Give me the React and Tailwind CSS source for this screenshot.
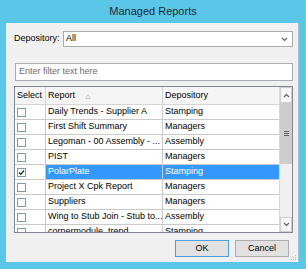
import React from 'react';

const rows = [
  { report: 'Daily Trends - Supplier A', depot: 'Stamping' },
  { report: 'First Shift Summary', depot: 'Managers' },
  { report: 'Legoman - 00 Assembly - ...', depot: 'Assembly' },
  { report: 'PIST', depot: 'Managers' },
  { report: 'PolarPlate', depot: 'Stamping', selected: true },
  { report: 'Project X Cpk Report', depot: 'Managers' },
  { report: 'Suppliers', depot: 'Managers' },
  { report: 'Wing to Stub Join - Stub to...', depot: 'Assembly' },
  { report: 'cornermodule_trend', depot: 'Stamping' },
];

const Checkbox = ({ checked }) => (
  <div className="w-[9px] h-[9px] border border-[#8296ad] bg-white flex items-center justify-center">
    {checked && (
      <svg width="7" height="7" viewBox="0 0 7 7">
        <path d="M1 3.5 L2.8 5.3 L6 1.5" fill="none" stroke="#1f2a36" strokeWidth="1.3" />
      </svg>
    )}
  </div>
);

const Chevron = ({ up }) => (
  <svg width="7" height="5" viewBox="0 0 7 5">
    <path d={up ? 'M1 4 L3.5 1.5 L6 4' : 'M1 1 L3.5 3.5 L6 1'} fill="none" stroke="#606060" strokeWidth="1.2" />
  </svg>
);

export default function App() {
  return (
    <div className="w-[306px] h-[269px] bg-[#5bc7e8] flex flex-col text-[9px] text-black" style={{ fontFamily: '"Liberation Sans", Arial, sans-serif' }}>
      {/* title bar */}
      <div className="h-[23px] flex items-center justify-center text-[11px] text-[#1c2a33] pb-[1px]">
        Managed Reports
      </div>

      {/* client area */}
      <div className="relative ml-[6px] w-[293px] h-[239px] bg-[#f0f0f0] border-r border-[#9fc6d4]">
        <div className="mt-[8px] flex items-center h-[16px]">
          <div className="pl-[8px] w-[57px]">Depository:</div>
          <div className="w-[230px] h-[16px] bg-white border border-[#acacac] flex items-center justify-between pl-[2px] pr-[4px]">
            <span>All</span>
            <Chevron />
          </div>
        </div>

        <div className="mt-[16px] ml-[9px] w-[278px] h-[18px] bg-white border border-[#abadb3] flex items-center pl-[3px] text-[#6d6d6d]">
          Enter filter text here
        </div>

        {/* grid */}
        <div className="mt-[5px] ml-[8px] w-[279px] h-[147px] border border-[#828790] bg-white flex overflow-hidden">
          <div className="w-[264px] flex flex-col">
            <div className="h-[18px] flex bg-[#f5f5f5] border-b border-[#d5d5d5] shrink-0">
              <div className="w-[31px] border-r border-[#d5d5d5] pl-[2px] flex items-center">Select</div>
              <div className="w-[117px] border-r border-[#d5d5d5] pl-[2px] flex items-center">
                <span>Report</span>
                <svg className="ml-[10px] mt-[2px]" width="6" height="5" viewBox="0 0 6 5">
                  <path d="M0.5 4.5 L3 0.8 L5.5 4.5 Z" fill="none" stroke="#c5c5c5" strokeWidth="0.9" />
                </svg>
              </div>
              <div className="w-[116px] pl-[2px] flex items-center">Depository</div>
            </div>
            {rows.map((r) => (
              <div key={r.report} className="h-[15px] flex border-b border-[#c9c9c9] shrink-0">
                <div className="w-[31px] border-r border-[#c9c9c9] pl-[2px] flex items-center bg-white">
                  <Checkbox checked={r.selected} />
                </div>
                <div className={`w-[117px] border-r border-[#c9c9c9] pl-[2px] flex items-center whitespace-nowrap overflow-hidden ${r.selected ? 'bg-[#3399ff] text-white' : ''}`}>
                  {r.report}
                </div>
                <div className={`w-[116px] pl-[2px] flex items-center ${r.selected ? 'bg-[#3399ff] text-white' : ''}`}>
                  {r.depot}
                </div>
              </div>
            ))}
          </div>

          {/* scrollbar */}
          <div className="w-[13px] flex flex-col bg-[#f0f0f0] border-l border-[#d9d9d9]">
            <div className="h-[16px] flex items-center justify-center bg-[#f7f7f7] border border-[#cfcfcf]">
              <Chevron up />
            </div>
            <div className="h-[61px] bg-[#cdcdcd] flex items-center justify-center">
              <div className="flex flex-col gap-[1px]">
                <div className="w-[5px] h-px bg-[#606060]" />
                <div className="w-[5px] h-px bg-[#606060]" />
                <div className="w-[5px] h-px bg-[#606060]" />
              </div>
            </div>
            <div className="flex-1" />
            <div className="h-[15px] flex items-center justify-center bg-[#f7f7f7] border border-[#cfcfcf]">
              <Chevron />
            </div>
          </div>
        </div>

        {/* buttons */}
        <div className="mt-[7px] flex justify-end gap-[6px] pr-[9px]">
          <div className="w-[54px] h-[17px] bg-[#e1e1e1] border border-[#4f9ee3] flex items-center justify-center">OK</div>
          <div className="w-[54px] h-[17px] bg-[#e1e1e1] border border-[#adadad] flex items-center justify-center">Cancel</div>
        </div>

        {/* size grip */}
        <div className="absolute right-[2px] bottom-[2px] grid grid-cols-3 gap-[1px]">
          <div />
          <div />
          <div className="w-px h-px bg-[#b5b5b5]" />
          <div />
          <div className="w-px h-px bg-[#b5b5b5]" />
          <div className="w-px h-px bg-[#b5b5b5]" />
          <div className="w-px h-px bg-[#b5b5b5]" />
          <div className="w-px h-px bg-[#b5b5b5]" />
          <div className="w-px h-px bg-[#b5b5b5]" />
        </div>
      </div>
    </div>
  );
}
